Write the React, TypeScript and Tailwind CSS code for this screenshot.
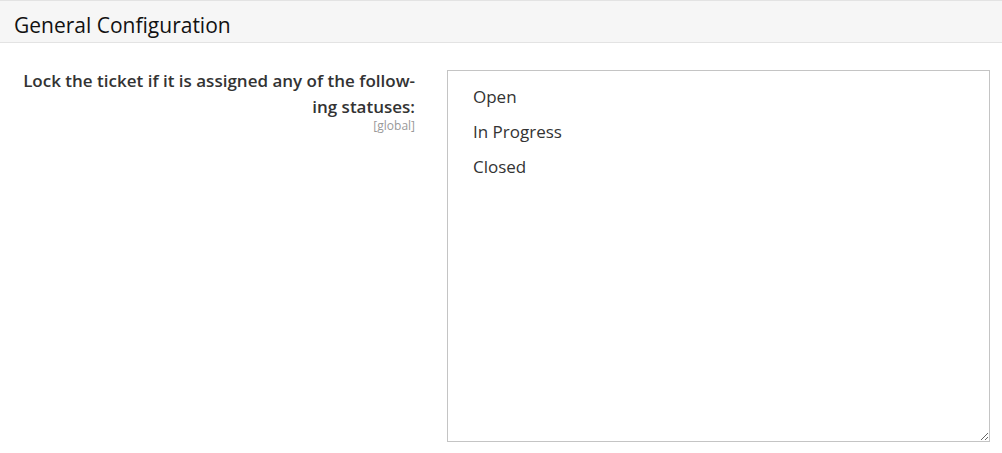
import React from "react";

export default function App() {
  return (
    <div className="w-[1002px] h-[453px] bg-white" style={{ fontFamily: '"Open Sans", sans-serif' }}>
      <div className="h-[43px] border-t border-b border-[#e3e3e3] bg-[#f6f6f6] pl-[14px] pt-[14px]">
        <h2 className="text-[21px] text-[#111] leading-[21px]">General Configuration</h2>
      </div>
      <div className="flex pt-[27px]">
        <div className="w-[415px] shrink-0 text-right -mt-[2px]">
          <div className="text-[17px] font-semibold text-[#333] leading-[26px]">
            Lock the ticket if it is assigned any of the follow-
            <br />
            ing statuses:
          </div>
          <div className="text-[12px] text-[#999] leading-[12px]">[global]</div>
        </div>
        <div className="ml-[32px] w-[543px] h-[372px] border border-[#c4c4c4] resize overflow-auto pl-[25px] pt-[8px]">
          {["Open", "In Progress", "Closed"].map((s) => (
            <div key={s} className="text-[17px] text-[#333] leading-[35px]">
              {s}
            </div>
          ))}
        </div>
      </div>
    </div>
  );
}
